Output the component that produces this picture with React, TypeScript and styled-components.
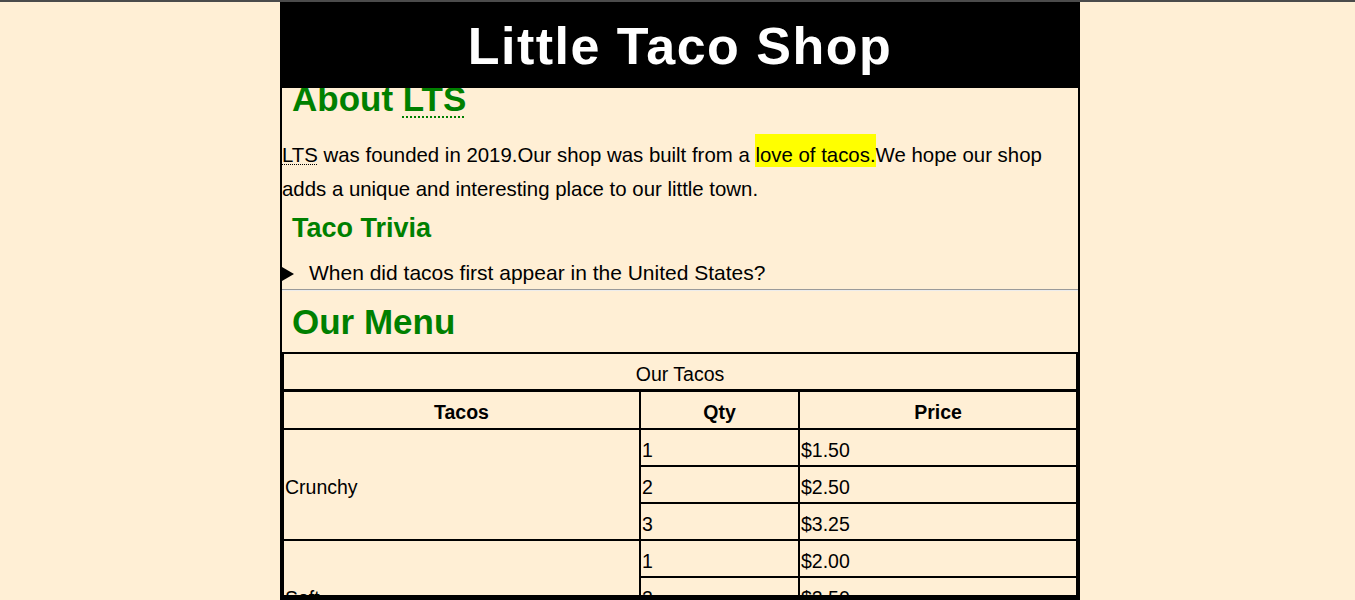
import React from "react";
import styled, { createGlobalStyle } from "styled-components";

const GlobalStyle = createGlobalStyle`
  html, body { margin: 0; padding: 0; }
  body {
    background: #ffefd5;
    border-top: 2px solid #4b4b4b;
    padding-left: 5px;
    font-family: "Liberation Sans", Arial, sans-serif;
    color: #000;
  }
`;

const Page = styled.div`
  box-sizing: border-box;
  width: 800px;
  height: 598px;
  margin: 0 auto;
  border: 2px solid #000;
  border-top: 0;
  border-bottom-width: 5px;
  overflow: hidden;
  font-size: 21px;
`;

const Header = styled.header`
  position: relative;
  z-index: 1;
  height: 86px;
  background: #000;
  display: flex;
  align-items: center;
  justify-content: center;
`;

const Title = styled.h1`
  margin: 0;
  padding-top: 2px;
  color: #fff;
  font-size: 52px;
  line-height: 52px;
  font-weight: 700;
  letter-spacing: 1.5px;
`;

const SectionTitle = styled.h2<{ $top: number; $bottom: number }>`
  margin: ${(p) => p.$top}px 0 ${(p) => p.$bottom}px;
  padding-left: 10px;
  color: #008000;
  font-size: 35px;
  line-height: 35px;
  font-weight: 700;
`;

const SubTitle = styled.h3`
  margin: 9px 0 14px;
  padding-left: 10px;
  color: #008000;
  font-size: 27px;
  line-height: 27px;
  font-weight: 700;
`;

const Abbr = styled.abbr<{ $heading?: boolean }>`
  text-decoration: underline dotted;
  text-decoration-thickness: ${(p) => (p.$heading ? "2px" : "1px")};
  text-underline-offset: ${(p) => (p.$heading ? "5px" : "2px")};
`;

const Paragraph = styled.p`
  margin: 22px 0 0;
  font-size: 20.4px;
  line-height: 34px;
`;

const Highlight = styled.mark`
  background: #ffff00;
  color: inherit;
  padding: 10px 0 1px;
`;

const Trivia = styled.details`
  margin: 0;
`;

const Question = styled.summary`
  list-style: none;
  line-height: 33px;
  cursor: pointer;
  &::-webkit-details-marker { display: none; }
  &::before {
    content: "";
    display: inline-block;
    width: 0;
    height: 0;
    border-left: 12px solid #000;
    border-top: 7px solid transparent;
    border-bottom: 7px solid transparent;
    margin-right: 15px;
    vertical-align: -1px;
  }
`;

const Rule = styled.hr`
  margin: 0;
  height: 0;
  border: 0;
  border-top: 1px solid #9a9a9a;
  border-bottom: 1px solid #ececec;
`;

const MenuTable = styled.table`
  width: 100%;
  table-layout: fixed;
  border-collapse: separate;
  border-spacing: 0;
  border: 2px solid #000;
  font-size: 19.5px;
`;

const Col = styled.col<{ $width?: number }>`
  width: ${(p) => (p.$width ? `${p.$width}px` : "auto")};
`;

const Caption = styled.th`
  padding: 5px 1px 0;
  line-height: 30px;
  font-weight: 400;
  text-align: center;
  border-bottom: 3px solid #000;
`;

const HeadCell = styled.th<{ $last?: boolean }>`
  padding: 5px 1px 0;
  line-height: 31px;
  font-weight: 700;
  text-align: center;
  border-bottom: 2px solid #000;
  border-right: ${(p) => (p.$last ? "0" : "2px solid #000")};
`;

const Cell = styled.td<{ $last?: boolean }>`
  padding: 5px 1px 0;
  line-height: 30px;
  text-align: left;
  vertical-align: middle;
  border-bottom: 2px solid #000;
  border-right: ${(p) => (p.$last ? "0" : "2px solid #000")};
`;

type Taco = { name: string; prices: [number, string][] };

const tacos: Taco[] = [
  { name: "Crunchy", prices: [[1, "$1.50"], [2, "$2.50"], [3, "$3.25"]] },
  { name: "Soft", prices: [[1, "$2.00"], [2, "$2.50"], [3, "$3.25"]] },
];

export default function App() {
  return (
    <>
      <GlobalStyle />
      <Page>
        <Header>
          <Title>Little Taco Shop</Title>
        </Header>
        <SectionTitle $top={-7} $bottom={0}>
          About <Abbr $heading title="Little Taco Shop">LTS</Abbr>
        </SectionTitle>
        <Paragraph>
          <Abbr title="Little Taco Shop">LTS</Abbr> was founded in 2019.Our shop was built from a{" "}
          <Highlight>love of tacos.</Highlight>We hope our shop adds a unique and interesting place to
          our little town.
        </Paragraph>
        <SubTitle>Taco Trivia</SubTitle>
        <Trivia>
          <Question>When did tacos first appear in the United States?</Question>
          <p>Tacos first appeared in the United States around 1905.</p>
        </Trivia>
        <Rule />
        <SectionTitle $top={13} $bottom={13}>Our Menu</SectionTitle>
        <MenuTable>
          <colgroup>
            <Col $width={357} />
            <Col $width={159} />
            <Col />
          </colgroup>
          <thead>
            <tr>
              <Caption colSpan={3}>Our Tacos</Caption>
            </tr>
            <tr>
              <HeadCell>Tacos</HeadCell>
              <HeadCell>Qty</HeadCell>
              <HeadCell $last>Price</HeadCell>
            </tr>
          </thead>
          <tbody>
            {tacos.map((taco) =>
              taco.prices.map(([qty, price], i) => (
                <tr key={`${taco.name}-${qty}`}>
                  {i === 0 && <Cell rowSpan={taco.prices.length}>{taco.name}</Cell>}
                  <Cell>{qty}</Cell>
                  <Cell $last>{price}</Cell>
                </tr>
              ))
            )}
          </tbody>
        </MenuTable>
      </Page>
    </>
  );
}
